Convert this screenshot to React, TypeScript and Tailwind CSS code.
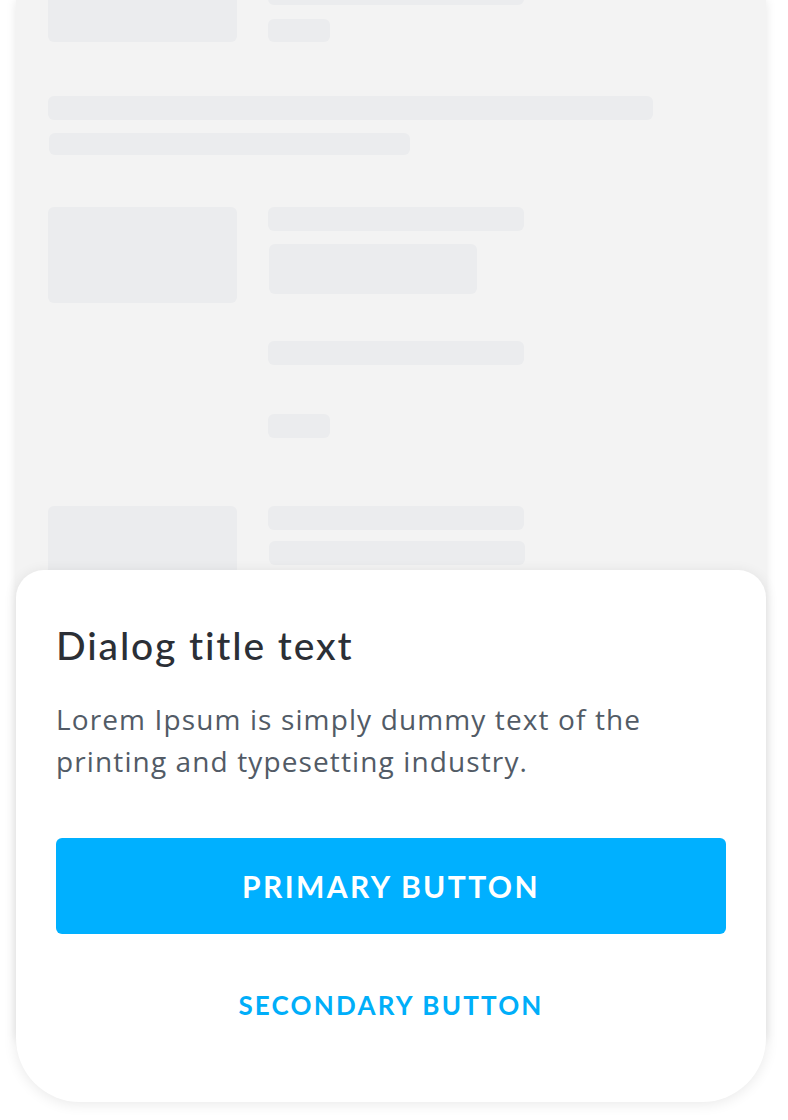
export default function App() {
  return (
    <div className="relative h-[1120px] w-[788px] overflow-hidden bg-white font-['Lato',sans-serif]">
      {/* Skeleton background screen */}
      <div className="ml-4 h-[1040px] w-[750px] overflow-hidden bg-[#f3f3f3] pl-[32px] shadow-[0_0_10px_rgba(0,0,0,0.10)]">
        <div className="-mt-[54px]">
          {/* Group 1 */}
          <div className="flex gap-[31px]">
            <div className="h-[96px] w-[189px] rounded-md bg-[#ebecee]"></div>
            <div className="pt-[35px]">
              <div className="h-6 w-[256px] rounded-md bg-[#ebecee]"></div>
              <div className="mt-[14px] h-[23px] w-[62px] rounded-md bg-[#ebecee]"></div>
            </div>
          </div>

          {/* Paragraph */}
          <div className="mt-[54px] h-6 w-[605px] rounded-md bg-[#ebecee]"></div>
          <div className="ml-px mt-[13px] h-[22px] w-[361px] rounded-md bg-[#ebecee]"></div>

          {/* Group 2 */}
          <div className="mt-[52px] flex gap-[31px]">
            <div className="h-[96px] w-[189px] rounded-md bg-[#ebecee]"></div>
            <div>
              <div className="h-6 w-[256px] rounded-md bg-[#ebecee]"></div>
              <div className="ml-px mt-[13px] h-[50px] w-[208px] rounded-md bg-[#ebecee]"></div>
              <div className="mt-[47px] h-6 w-[256px] rounded-md bg-[#ebecee]"></div>
              <div className="mt-[49px] h-6 w-[62px] rounded-md bg-[#ebecee]"></div>
            </div>
          </div>

          {/* Group 3 */}
          <div className="mt-[68px] flex gap-[31px]">
            <div className="h-[96px] w-[189px] rounded-md bg-[#ebecee]"></div>
            <div>
              <div className="h-6 w-[256px] rounded-md bg-[#ebecee]"></div>
              <div className="ml-px mt-[11px] h-6 w-[256px] rounded-md bg-[#ebecee]"></div>
            </div>
          </div>
        </div>
      </div>

      {/* Dialog sheet */}
      <div className="absolute left-4 top-[570px] h-[532px] w-[750px] rounded-t-[28px] rounded-b-[64px] bg-white px-10 pt-[51px] shadow-[0_2px_14px_rgba(0,0,0,0.09)]">
        <h2 className="text-[39px] font-medium leading-[48px] tracking-[0.048em] text-[#2b2f36]">
          Dialog title text
        </h2>
        <p className="mt-[29px] font-['Open_Sans',sans-serif] text-[28px] leading-[42px] tracking-[0.04em] text-[#525b66]">
          Lorem Ipsum is simply dummy text of the
          <br />
          printing and typesetting industry.
        </p>
        <button className="mt-[56px] flex h-[96px] w-[670px] items-center justify-center rounded-md bg-[#00b0ff] text-[30px] font-bold tracking-[0.08em] text-white">
          PRIMARY BUTTON
        </button>
        <button className="mt-[23px] flex h-[96px] w-[670px] items-center justify-center text-[26px] font-bold tracking-[0.085em] text-[#00aef9]">
          SECONDARY BUTTON
        </button>
      </div>
    </div>
  );
}
